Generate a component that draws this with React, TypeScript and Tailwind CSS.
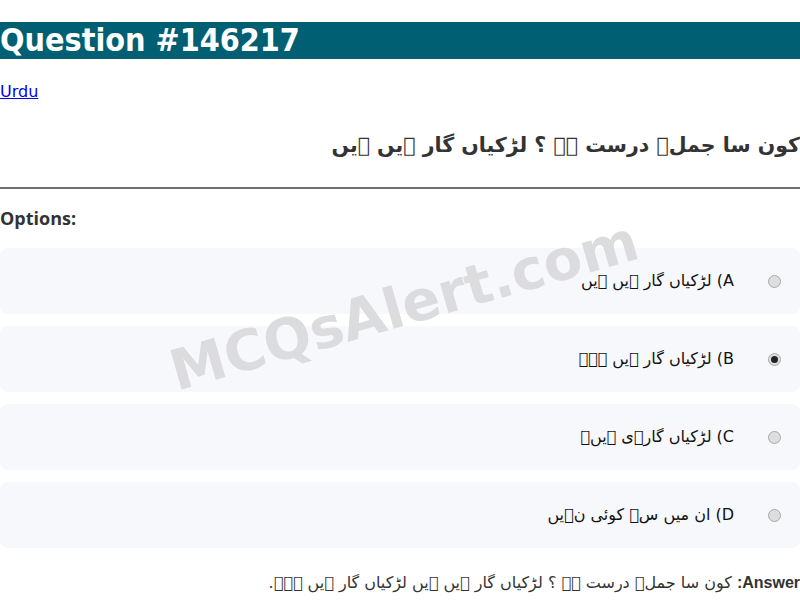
import React from 'react';

// glyphs the page font lacks show up as empty boxes in the reference
const X = '\uE000';

const OPTIONS = [
  { key: 'A', text: `لڑکیاں گار ${X}یں ${X}یں`, checked: false },
  { key: 'B', text: `لڑکیاں گار ${X}یں ${X}${X}${X}`, checked: true },
  { key: 'C', text: `لڑکیاں گار${X}ی ${X}یں${X}`, checked: false },
  { key: 'D', text: `ان میں س${X} کوئی ن${X}یں`, checked: false },
];

const QUESTION = `کون سا جمل${X} درست ${X}${X} ؟ لڑکیاں گار ${X}یں ${X}یں`;

function Radio({ checked }: { checked: boolean }) {
  return (
    <span className="flex h-[13px] w-[13px] shrink-0 items-center justify-center rounded-full border border-[#a9a9a9] bg-[#dedede]">
      {checked && <span className="h-[7px] w-[7px] rounded-full bg-[#222]" />}
    </span>
  );
}

export default function App() {
  return (
    <div className="relative min-h-[609px] overflow-hidden bg-white font-['DejaVu_Sans',sans-serif] text-[#333]">
      <h1 className="mt-[22px] h-[37px] bg-[#005f73] text-[32px] font-bold leading-[37px] text-white [font-stretch:condensed]">
        Question #146217
      </h1>

      <div className="mt-[23px] text-[16px] leading-[19px]">
        <a href="#" className="text-[#0000ee] underline">Urdu</a>
      </div>

      <h2 dir="rtl" className="mt-[30px] text-[20.5px] font-bold leading-[28px]">
        {QUESTION}
      </h2>

      <div className="mt-[28px] h-[2px] bg-[#6e6e6e]" />

      <div className="mt-[17px] font-['Open_Sans',sans-serif] text-[18px] font-bold leading-[24px]">Options:</div>

      <div className="mt-[18px] flex flex-col gap-[12px]">
        {OPTIONS.map(o => (
          <div key={o.key} dir="rtl" className="flex h-[66px] items-center gap-[34px] rounded-lg bg-[#f7f8fc] pr-[19px] text-[16px] text-[#111]">
            <Radio checked={o.checked} />
            <span>{o.key}) {o.text}</span>
          </div>
        ))}
      </div>

      <p dir="rtl" className="mt-[24px] text-[16px] leading-[22px]">
        <b className="font-['Liberation_Sans',sans-serif]">Answer:</b> {QUESTION} لڑکیاں گار {X}یں {X}{X}{X}.
      </p>

      <div className="pointer-events-none absolute left-[404px] top-[306px] -translate-x-1/2 -translate-y-1/2 -rotate-[16deg] whitespace-nowrap text-[56px] font-bold text-[#dcdcdf]">
        MCQsAlert.com
      </div>
    </div>
  );
}
